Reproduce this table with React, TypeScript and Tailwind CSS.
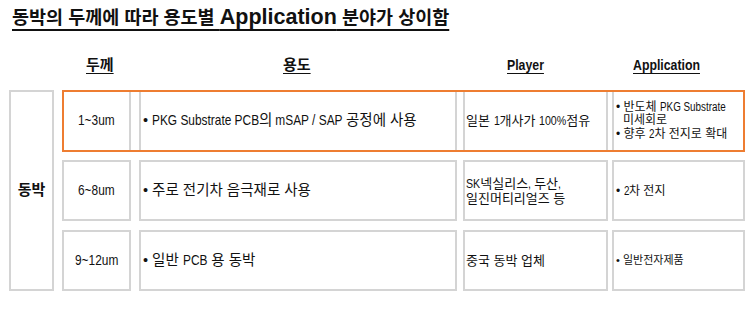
import React, { useLayoutEffect, useRef, useState } from "react";

const FONT = "font-['Liberation_Sans','Noto_Sans_CJK_KR',sans-serif]";
const cellBase = "border-2 border-[#d4d4d4] bg-white flex items-center";

/* Condensed Latin run (Arial-Narrow look): scaled horizontally, layout width corrected */
function N({ children, className = "" }: { children: React.ReactNode; className?: string }) {
  const ref = useRef<HTMLSpanElement>(null);
  const [mr, setMr] = useState(0);
  useLayoutEffect(() => {
    if (ref.current) setMr(-ref.current.offsetWidth * 0.18);
  }, []);
  return (
    <span
      ref={ref}
      className={`inline-block origin-left scale-x-[0.82] whitespace-pre ${className}`}
      style={{ marginRight: mr }}
    >
      {children}
    </span>
  );
}

function Row({
  highlight,
  h,
  thick,
  usage,
  player,
  app,
}: {
  highlight?: boolean;
  h: string;
  thick: React.ReactNode;
  usage: React.ReactNode;
  player: React.ReactNode;
  app: React.ReactNode;
}) {
  return (
    <div className={`relative flex ${h}`}>
      <div className={`${cellBase} w-[69px] justify-center text-[14.5px]`}>{thick}</div>
      <div className="w-[8px]" />
      <div className={`${cellBase} w-[318px] pl-[2px] text-[14.5px]`}>{usage}</div>
      <div className="w-[6px]" />
      <div className={`${cellBase} w-[145px] pl-[1px] text-[13px]`}>{player}</div>
      <div className="w-[4px]" />
      <div className={`${cellBase} w-[133px] pl-[2px]`}>{app}</div>
      {highlight && (
        <div className="pointer-events-none absolute inset-0 border-2 border-[#ee7d31]" />
      )}
    </div>
  );
}

export default function App() {
  return (
    <div className={`w-[756px] h-[312px] bg-white text-[#111111] ${FONT}`}>
      <div className="pl-[12px] pt-[4px] h-[56px]">
        <span className="font-bold text-[18.5px] underline decoration-[2px] underline-offset-[5px] leading-[26px]">
          동박의 두께에 따라 용도별 <span className="text-[21.5px]">Application</span> 분야가 상이함
        </span>
      </div>

      <div className="ml-[9px] flex h-[28px] items-start font-bold text-[15px] leading-[18px]">
        <div className="w-[53px]" />
        <div className="w-[69px] pl-[24px]">
          <span className="underline underline-offset-[3px]">두께</span>
        </div>
        <div className="w-[8px]" />
        <div className="w-[318px] pl-[144px]">
          <span className="underline underline-offset-[3px]">용도</span>
        </div>
        <div className="w-[6px]" />
        <div className="w-[145px] pl-[44px]">
          <N className="underline underline-offset-[3px]">Player</N>
        </div>
        <div className="w-[4px]" />
        <div className="w-[133px] pl-[21px]">
          <N className="underline underline-offset-[3px]">Application</N>
        </div>
      </div>

      <div className="ml-[9px] mt-[6px] flex">
        <div className={`${cellBase} w-[45px] h-[201px] justify-center font-bold text-[15px]`}>
          동박
        </div>
        <div className="w-[8px]" />
        <div className="flex flex-col">
          <Row
            highlight
            h="h-[62px]"
            thick={<N>1~3um</N>}
            usage={
              <span>
                • <N>PKG Substrate PCB</N>의<N> mSAP / SAP </N>공정에 사용
              </span>
            }
            player={
              <span>
                일본 <N>1</N>개사가 <N>100%</N>점유
              </span>
            }
            app={
              <div className="text-[12px] leading-[13.5px]">
                <div>
                  • 반도체 <N>PKG Substrate</N>
                </div>
                <div className="pl-[7px]">미세회로</div>
                <div>
                  • 향후 <N>2</N>차 전지로 확대
                </div>
              </div>
            }
          />
          <div className="mt-[8px]">
            <Row
              h="h-[61px]"
              thick={<N>6~8um</N>}
              usage={<span>• 주로 전기차 음극재로 사용</span>}
              player={
                <div className="leading-[15px]">
                  <div>
                    <N>SK</N>넥실리스<N>, </N>두산<N>,</N>
                  </div>
                  <div>일진머티리얼즈 등</div>
                </div>
              }
              app={
                <span className="text-[12px]">
                  • <N>2</N>차 전지
                </span>
              }
            />
          </div>
          <div className="mt-[9px]">
            <Row
              h="h-[61px]"
              thick={<N>9~12um</N>}
              usage={
                <span>
                  • 일반 <N>PCB</N> 용 동박
                </span>
              }
              player={<span>중국 동박 업체</span>}
              app={<span className="text-[11px]">• 일반전자제품</span>}
            />
          </div>
        </div>
      </div>
    </div>
  );
}
